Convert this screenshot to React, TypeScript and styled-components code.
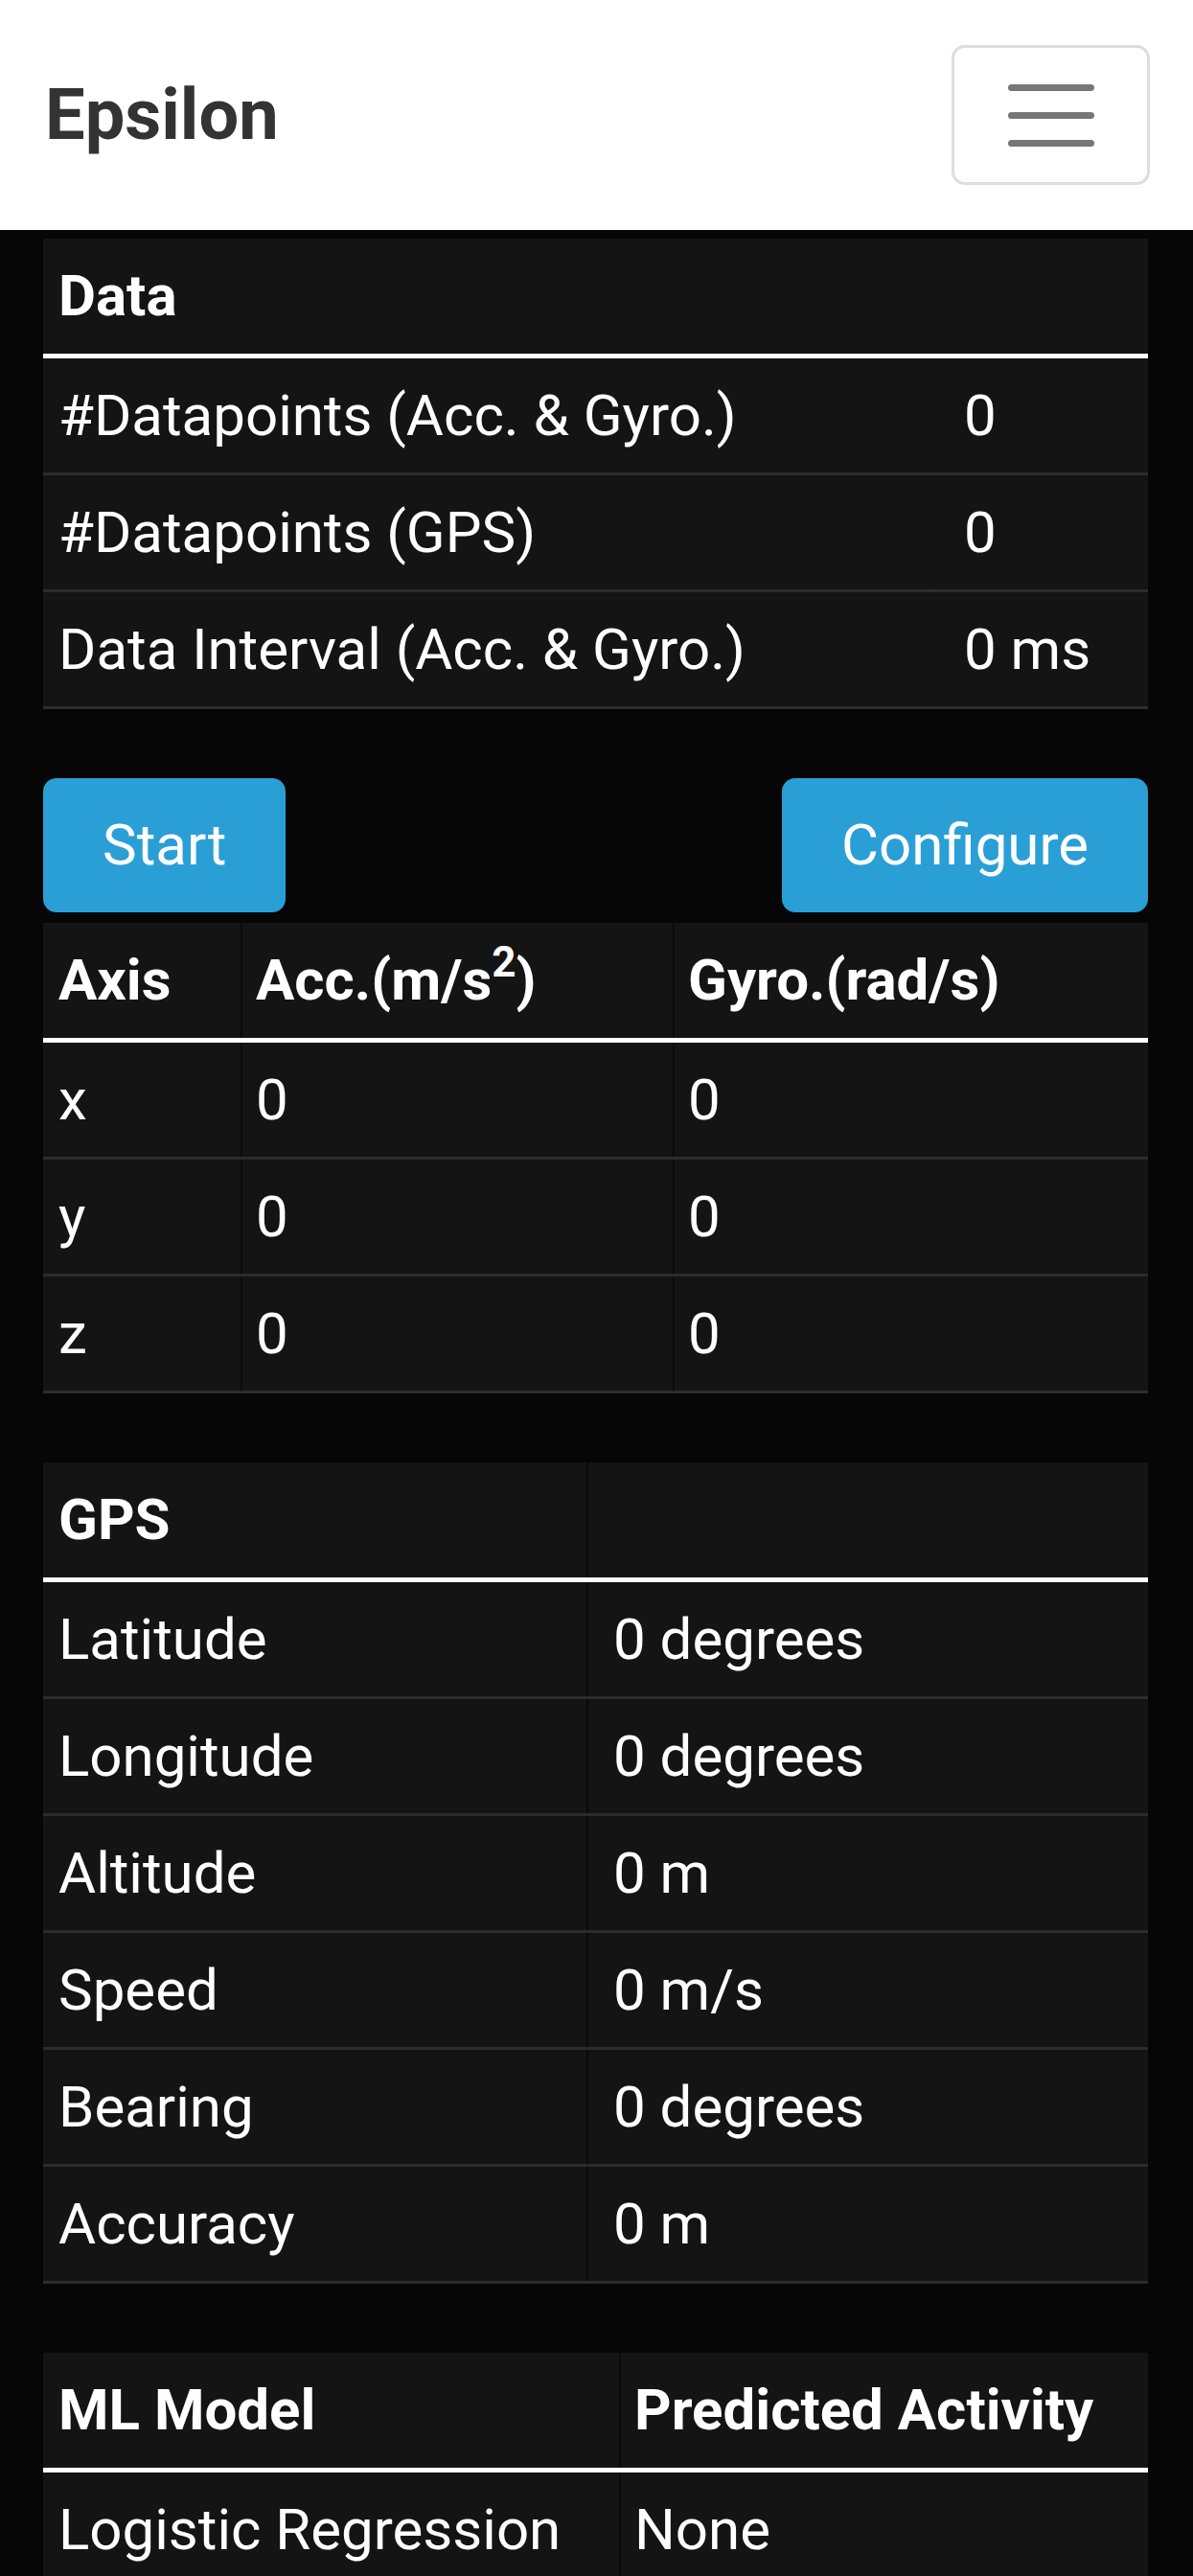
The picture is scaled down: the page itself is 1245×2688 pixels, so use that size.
import React from 'react';
import styled, { createGlobalStyle } from 'styled-components';

// --- Global ---

const GlobalStyle = createGlobalStyle`
  html, body {
    margin: 0;
    padding: 0;
    background: #060606;
  }
  body {
    font-family: Roboto, "Noto Sans", "Liberation Sans", sans-serif;
  }
  * {
    box-sizing: border-box;
  }
`;

// --- Styled Components ---

const Page = styled.div`
  height: 2688px;
  overflow: hidden;
  background: #060606;
`;

const NavBar = styled.nav`
  height: 240px;
  background: #ffffff;
  display: flex;
  align-items: center;
  justify-content: space-between;
  padding: 0 45px 0 47px;
`;

const Brand = styled.a`
  font-size: 74px;
  font-weight: 700;
  color: #333333;
  text-decoration: none;
  line-height: 1;
`;

const Toggler = styled.button`
  width: 207px;
  height: 146px;
  border: 3px solid #dddddd;
  border-radius: 14px;
  background: transparent;
  display: flex;
  flex-direction: column;
  align-items: center;
  justify-content: center;
  gap: 22px;
  padding: 0;
`;

const TogglerBar = styled.span`
  display: block;
  width: 90px;
  height: 7px;
  border-radius: 4px;
  background: #777777;
`;

const Main = styled.main`
  padding: 9px 47px 0 45px;
`;

const Table = styled.table<{ $divider?: string }>`
  width: 100%;
  border-collapse: collapse;
  table-layout: fixed;
  background: #141414;
  color: #ffffff;
  font-size: 60px;
  line-height: 84px;
  margin-bottom: 72px;

  th + th,
  td + td {
    border-left: 2px solid ${(p) => p.$divider ?? '#0a0a0a'};
  }
`;

const HeadCell = styled.th<{ $width: number; $pad?: number }>`
  width: ${(p) => p.$width}px;
  text-align: left;
  font-weight: 700;
  padding: 18px 14px 18px ${(p) => p.$pad ?? 16}px;
  border-bottom: 5px solid #ffffff;
  white-space: nowrap;
`;

const Cell = styled.td<{ $pad?: number }>`
  font-weight: 400;
  padding: 18px 14px 17px ${(p) => p.$pad ?? 16}px;
  border-bottom: 3px solid #2c2c2c;
  white-space: nowrap;
`;

const Sup = styled.sup`
  font-size: 44px;
  line-height: 0;
  vertical-align: 24px;
`;

const ButtonRow = styled.div`
  display: flex;
  justify-content: space-between;
  margin: 0 0 11px;
`;

const Button = styled.button`
  background: #2a9fd6;
  color: #ffffff;
  border: none;
  border-radius: 14px;
  font-family: Roboto, "Noto Sans", sans-serif;
  font-size: 60px;
  line-height: 84px;
  font-weight: 400;
  padding: 28px 62px;
`;

// --- Data ---

const dataRows = [
  ['#Datapoints (Acc. & Gyro.)', '0'],
  ['#Datapoints (GPS)', '0'],
  ['Data Interval (Acc. & Gyro.)', '0 ms'],
];

const axisRows = [
  ['x', '0', '0'],
  ['y', '0', '0'],
  ['z', '0', '0'],
];

const gpsRows = [
  ['Latitude', '0 degrees'],
  ['Longitude', '0 degrees'],
  ['Altitude', '0 m'],
  ['Speed', '0 m/s'],
  ['Bearing', '0 degrees'],
  ['Accuracy', '0 m'],
];

const modelRows = [
  ['Logistic Regression', 'None'],
  ['Random Forest', 'None'],
];

// --- Component ---

const App = () => {
  return (
    <Page>
      <GlobalStyle />
      <NavBar>
        <Brand href="#">Epsilon</Brand>
        <Toggler aria-label="Toggle navigation">
          <TogglerBar />
          <TogglerBar />
          <TogglerBar />
        </Toggler>
      </NavBar>

      <Main>
        <Table $divider="#131313">
          <thead>
            <tr>
              <HeadCell $width={931}>Data</HeadCell>
              <HeadCell $width={222} />
            </tr>
          </thead>
          <tbody>
            {dataRows.map(([label, value]) => (
              <tr key={label}>
                <Cell>{label}</Cell>
                <Cell $pad={29}>{value}</Cell>
              </tr>
            ))}
          </tbody>
        </Table>

        <ButtonRow>
          <Button>Start</Button>
          <Button>Configure</Button>
        </ButtonRow>

        <Table>
          <thead>
            <tr>
              <HeadCell $width={207}>Axis</HeadCell>
              <HeadCell $width={451} $pad={14}>
                Acc.(m/s<Sup>2</Sup>)
              </HeadCell>
              <HeadCell $width={495} $pad={14}>
                Gyro.(rad/s)
              </HeadCell>
            </tr>
          </thead>
          <tbody>
            {axisRows.map(([axis, acc, gyro]) => (
              <tr key={axis}>
                <Cell>{axis}</Cell>
                <Cell $pad={14}>{acc}</Cell>
                <Cell $pad={14}>{gyro}</Cell>
              </tr>
            ))}
          </tbody>
        </Table>

        <Table>
          <thead>
            <tr>
              <HeadCell $width={568}>GPS</HeadCell>
              <HeadCell $width={585} />
            </tr>
          </thead>
          <tbody>
            {gpsRows.map(([label, value]) => (
              <tr key={label}>
                <Cell>{label}</Cell>
                <Cell $pad={26}>{value}</Cell>
              </tr>
            ))}
          </tbody>
        </Table>

        <Table>
          <thead>
            <tr>
              <HeadCell $width={602}>ML Model</HeadCell>
              <HeadCell $width={551} $pad={14}>
                Predicted Activity
              </HeadCell>
            </tr>
          </thead>
          <tbody>
            {modelRows.map(([model, activity]) => (
              <tr key={model}>
                <Cell>{model}</Cell>
                <Cell $pad={14}>{activity}</Cell>
              </tr>
            ))}
          </tbody>
        </Table>
      </Main>
    </Page>
  );
};

export default App;
